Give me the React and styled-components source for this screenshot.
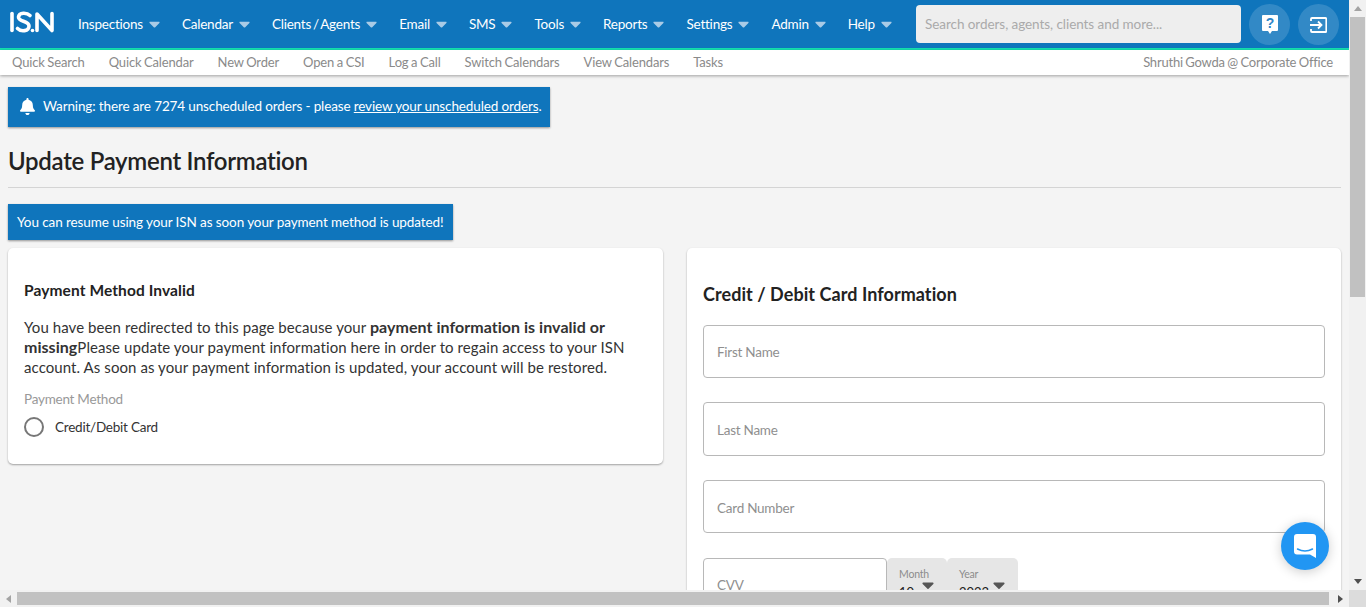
import React from 'react';
import styled, { createGlobalStyle } from 'styled-components';
import { FaBell, FaCaretDown } from 'react-icons/fa';

const NAV_ITEMS = ['Inspections', 'Calendar', 'Clients / Agents', 'Email', 'SMS', 'Tools', 'Reports', 'Settings', 'Admin', 'Help'];
const SUB_ITEMS = ['Quick Search', 'Quick Calendar', 'New Order', 'Open a CSI', 'Log a Call', 'Switch Calendars', 'View Calendars', 'Tasks'];
const FIELDS = ['First Name', 'Last Name', 'Card Number'];

const Logo = () => (
    <svg width="46" height="24" viewBox="0 0 46 24" fill="none" stroke="#fff" strokeWidth="3.6" strokeLinecap="round">
        <path d="M3 3.500v17" />
        <path d="M21 5.500C18 2.500 10 2 9.500 7C9 12 20 10.500 20 16C20 21.500 12 22 8.500 18.500" />
        <circle cx="23.500" cy="20.500" r="1.800" fill="#fff" stroke="none" />
        <path d="M28 20.500V4L43 20.500V3.500" strokeLinejoin="round" />
    </svg>
);

const HelpIcon = () => (
    <svg width="16" height="19" viewBox="0 0 16 19">
        <path d="M1 0h14a1 1 0 0 1 1 1v14a1 1 0 0 1-1 1h-5l-2 3l-2-3H1a1 1 0 0 1-1-1V1a1 1 0 0 1 1-1z" fill="#fff" />
        <text x="8" y="13" textAnchor="middle" fontSize="14" fontWeight="700" fontFamily="Liberation Sans, sans-serif" fill="#2f86c8">?</text>
    </svg>
);

const ExitIcon = () => (
    <svg width="17" height="16" viewBox="0 0 17 16" fill="none" stroke="#fff" strokeWidth="1.800">
        <path d="M1 4V2a1 1 0 0 1 1-1h13.500a.8.8 0 0 1 .8.8v12.400a.8.8 0 0 1-.8.8H2a1 1 0 0 1-1-1v-2" />
        <path d="M0 8h11M8 4.500L11.500 8L8 11.500" />
    </svg>
);

const ChatIcon = () => (
    <svg width="22" height="24" viewBox="0 0 22 24">
        <path d="M3 0h16a3 3 0 0 1 3 3v21l-6-3.500H3a3 3 0 0 1-3-3V3a3 3 0 0 1 3-3z" fill="#fff" />
        <path d="M3.500 15c4.500 2.400 10.500 2.400 15 0" fill="none" stroke="#2196f3" strokeWidth="1.500" strokeLinecap="round" />
    </svg>
);

const App = () => {
    return (
        <>
            <GlobalStyle />
            <Shell>
                <Viewport>
                    <Header>
                        <LogoHold><Logo /></LogoHold>
                        <Nav>
                            {NAV_ITEMS.map((item) => (
                                <NavItem key={item}>
                                    {item}
                                    <FaCaretDown />
                                </NavItem>
                            ))}
                        </Nav>
                        <Search placeholder="Search orders, agents, clients and more..." />
                        <RoundButton><HelpIcon /></RoundButton>
                        <RoundButton><ExitIcon /></RoundButton>
                    </Header>
                    <SubNav>
                        {SUB_ITEMS.map((item) => <SubLink key={item}>{item}</SubLink>)}
                        <UserName>Shruthi Gowda @ Corporate Office</UserName>
                    </SubNav>
                    <Main>
                        <Banner $top>
                            <FaBell />
                            <span>Warning: there are 7274 unscheduled orders - please <u>review your unscheduled orders</u>.</span>
                        </Banner>
                        <Title>Update Payment Information</Title>
                        <Banner>You can resume using your ISN as soon your payment method is updated!</Banner>
                        <Columns>
                            <InfoCard>
                                <InfoTitle>Payment Method Invalid</InfoTitle>
                                <InfoText>
                                    You have been redirected to this page because your <b>payment information is invalid or missing</b>Please update your payment information here in order to regain access to your ISN account. As soon as your payment information is updated, your account will be restored.
                                </InfoText>
                                <MethodLabel>Payment Method</MethodLabel>
                                <Radio>
                                    <RadioDot />
                                    Credit/Debit Card
                                </Radio>
                            </InfoCard>
                            <FormCard>
                                <FormTitle>Credit / Debit Card Information</FormTitle>
                                {FIELDS.map((field) => <Field key={field} placeholder={field} />)}
                                <CardRow>
                                    <CvvField placeholder="CVV" />
                                    <DateSelect $width={60}>
                                        <small>Month</small>
                                        <FaCaretDown />
                                        <strong>10</strong>
                                    </DateSelect>
                                    <DateSelect $width={71}>
                                        <small>Year</small>
                                        <FaCaretDown />
                                        <strong>2023</strong>
                                    </DateSelect>
                                </CardRow>
                            </FormCard>
                        </Columns>
                    </Main>
                    <ChatButton><ChatIcon /></ChatButton>
                </Viewport>
                <VerticalBar>
                    <ArrowUp />
                    <VerticalThumb />
                    <ArrowDown />
                </VerticalBar>
                <HorizontalBar>
                    <ArrowLeft />
                    <HorizontalThumb />
                    <ArrowRight />
                </HorizontalBar>
                <Corner />
            </Shell>
        </>
    );
};

export default App;

const GlobalStyle = createGlobalStyle`
    html, body {
        margin: 0;
        height: 100%;
        overflow: hidden;
    }
    body {
        font-family: 'Lato', 'Noto Sans', sans-serif;
        color: #222;
    }
    * {
        box-sizing: border-box;
    }
`;
const Shell = styled.div`
    width: 100vw;
    height: 100vh;
    display: grid;
    grid-template-columns: 1fr 17px;
    grid-template-rows: 1fr 17px;
`;
const Viewport = styled.div`
    position: relative;
    overflow: hidden;
    background-color: #f4f4f4;
    min-width: 0;
    min-height: 0;
`;
const Header = styled.header`
    height: 50px;
    display: flex;
    align-items: flex-start;
    padding-right: 2px;
    background-color: #0f75bc;
    border-bottom: 2px solid #14e0b0;
`;
const LogoHold = styled.div`
    width: 66px;
    padding: 10px 0 0 9px;
    flex-shrink: 0;
    svg {
        display: block;
    }
`;
const Nav = styled.nav`
    display: flex;
    height: 47px;
    align-items: center;
    flex: 1;
    min-width: 0;
    padding-left: 12px;
`;
const NavItem = styled.div`
    display: flex;
    align-items: center;
    gap: 6px;
    margin-right: 22px;
    font-size: 13.500px;
    letter-spacing: -0.22px;
    word-spacing: -1.400px;
    color: #fff;
    white-space: nowrap;
    svg {
        color: #a9cbe6;
        width: 11px;
        height: 18px;
    }
`;
const Search = styled.input`
    width: 325px;
    height: 38px;
    flex-shrink: 0;
    margin: 5px 8px 0 0;
    padding: 0 9px 1px;
    background-color: #eee;
    border: none;
    border-radius: 4px;
    font-family: inherit;
    font-size: 13.500px;
    letter-spacing: -0.06px;
    &::placeholder {
        color: #aaa;
    }
`;
const RoundButton = styled.div`
    width: 41px;
    height: 41px;
    margin: 4px 8px 0 0;
    border-radius: 50%;
    background-color: rgba(255, 255, 255, 0.15);
    display: flex;
    align-items: center;
    justify-content: center;
    flex-shrink: 0;
`;
const SubNav = styled.div`
    position: relative;
    height: 25px;
    display: flex;
    align-items: center;
    gap: 24px;
    padding: 0 16px 2px 12px;
    background-color: #fff;
    box-shadow: 0 1px 3px rgba(0, 0, 0, 0.35);
`;
const SubLink = styled.span`
    font-size: 13px;
    letter-spacing: -0.15px;
    word-spacing: -0.6px;
    color: #8a8a8a;
    white-space: nowrap;
`;
const UserName = styled(SubLink)`
    margin-left: auto;
    letter-spacing: -0.22px;
`;
const Main = styled.main`
    padding: 12px 8px 0;
`;
const Banner = styled.div`
    display: flex;
    align-items: center;
    width: fit-content;
    height: ${(props) => (props.$top ? '40px' : '36px')};
    padding: 0 9px ${(props) => (props.$top ? '2px' : '0')} ${(props) => (props.$top ? '11px' : '9px')};
    gap: 7px;
    background-color: #0f75bc;
    color: #fff;
    font-size: 13.500px;
    letter-spacing: ${(props) => (props.$top ? '-0.13px' : '-0.09px')};
    box-shadow: 0 1px 2px rgba(0, 0, 0, 0.4);
    white-space: pre-wrap;
    svg {
        width: 17px;
        height: 17px;
    }
`;
const Title = styled.h1`
    margin: 19px 0 16px;
    padding-bottom: 12px;
    font-size: 24px;
    line-height: 29px;
    font-weight: 600;
    letter-spacing: -0.3px;
    color: #222;
    border-bottom: 1px solid #d4d4d4;
`;
const Columns = styled.div`
    display: grid;
    grid-template-columns: 655px 654px;
    gap: 24px;
    align-items: start;
    margin-top: 8px;
`;
const Card = styled.section`
    background-color: #fff;
    border-radius: 5px;
    box-shadow: 0 1px 2px rgba(0, 0, 0, 0.35);
    padding: 0 16px;
`;
const InfoCard = styled(Card)`
    height: 216px;
    padding-top: 32px;
`;
const InfoTitle = styled.h3`
    margin: 0 0 17px;
    font-size: 15.500px;
    line-height: 20px;
    font-weight: 700;
    letter-spacing: 0.1px;
`;
const InfoText = styled.p`
    margin: 0 0 13px;
    font-size: 15px;
    line-height: 20px;
    letter-spacing: 0.08px;
    color: #333;
    b {
        font-size: 16px;
        letter-spacing: 0.04px;
    }
`;
const MethodLabel = styled.div`
    font-size: 13.500px;
    line-height: 18px;
    letter-spacing: -0.25px;
    color: #999;
`;
const Radio = styled.div`
    display: flex;
    align-items: center;
    gap: 11px;
    margin-top: 9px;
    font-size: 13.500px;
    letter-spacing: -0.23px;
    color: #333;
`;
const RadioDot = styled.span`
    width: 20px;
    height: 20px;
    border: 2px solid #777;
    border-radius: 50%;
`;
const FormCard = styled(Card)`
    height: 700px;
    padding-top: 34px;
`;
const FormTitle = styled.h2`
    margin: 0 0 18.600px;
    font-size: 18px;
    line-height: 24px;
    font-weight: 700;
    letter-spacing: 0.06px;
`;
const Field = styled.input`
    display: block;
    width: 100%;
    height: 53.400px;
    margin-bottom: 24.300px;
    padding: 2px 13px 0;
    background-color: #fff;
    border: 1px solid #b8b8b8;
    border-radius: 4px;
    font-family: inherit;
    font-size: 13.500px;
    letter-spacing: -0.25px;
    &::placeholder {
        color: #8f8f8f;
    }
`;
const CardRow = styled.div`
    display: flex;
    align-items: flex-start;
`;
const CvvField = styled(Field)`
    width: 184px;
    margin: 0;
`;
const DateSelect = styled.div`
    position: relative;
    width: ${(props) => props.$width}px;
    height: 53px;
    padding: 10px 12px 0;
    background-color: #e6e6e6;
    border-radius: 5px 5px 0 0;
    small {
        display: block;
        font-size: 10.500px;
        line-height: 12px;
        letter-spacing: -0.2px;
        color: #8c8c8c;
    }
    strong {
        display: block;
        font-weight: 400;
        font-size: 13px;
        line-height: 18px;
        margin-top: 3px;
        color: #222;
    }
    svg {
        position: absolute;
        top: 17px;
        right: 13px;
        width: 12px;
        height: 20px;
        color: #555;
    }
`;
const ChatButton = styled.div`
    position: absolute;
    right: 20px;
    bottom: 20px;
    width: 48px;
    height: 48px;
    border-radius: 50%;
    background-color: #2196f3;
    box-shadow: 0 2px 12px rgba(0, 0, 0, 0.2);
    display: flex;
    align-items: center;
    justify-content: center;
`;
const VerticalBar = styled.div`
    display: flex;
    flex-direction: column;
    align-items: center;
    background-color: #f1f1f1;
`;
const HorizontalBar = styled.div`
    display: flex;
    align-items: center;
    background-color: #f1f1f1;
`;
const VerticalThumb = styled.div`
    width: 15px;
    height: 280px;
    background-color: #c1c1c1;
`;
const HorizontalThumb = styled.div`
    flex: 1;
    height: 13px;
    margin-right: 3px;
    background-color: #c1c1c1;
`;
const Corner = styled.div`
    background-color: #dcdcdc;
`;
const ArrowBox = styled.div`
    flex-shrink: 0;
    width: 17px;
    height: 17px;
    display: flex;
    align-items: center;
    justify-content: center;
    &::after {
        content: '';
        border: 4px solid transparent;
    }
`;
const ArrowUp = styled(ArrowBox)`
    &::after {
        border-bottom: 5px solid #a3a3a3;
        border-top-width: 0;
    }
`;
const ArrowDown = styled(ArrowBox)`
    margin-top: auto;
    &::after {
        border-top: 5px solid #505050;
        border-bottom-width: 0;
    }
`;
const ArrowLeft = styled(ArrowBox)`
    &::after {
        border-right: 5px solid #a3a3a3;
        border-left-width: 0;
    }
`;
const ArrowRight = styled(ArrowBox)`
    &::after {
        border-left: 5px solid #505050;
        border-right-width: 0;
    }
`;
